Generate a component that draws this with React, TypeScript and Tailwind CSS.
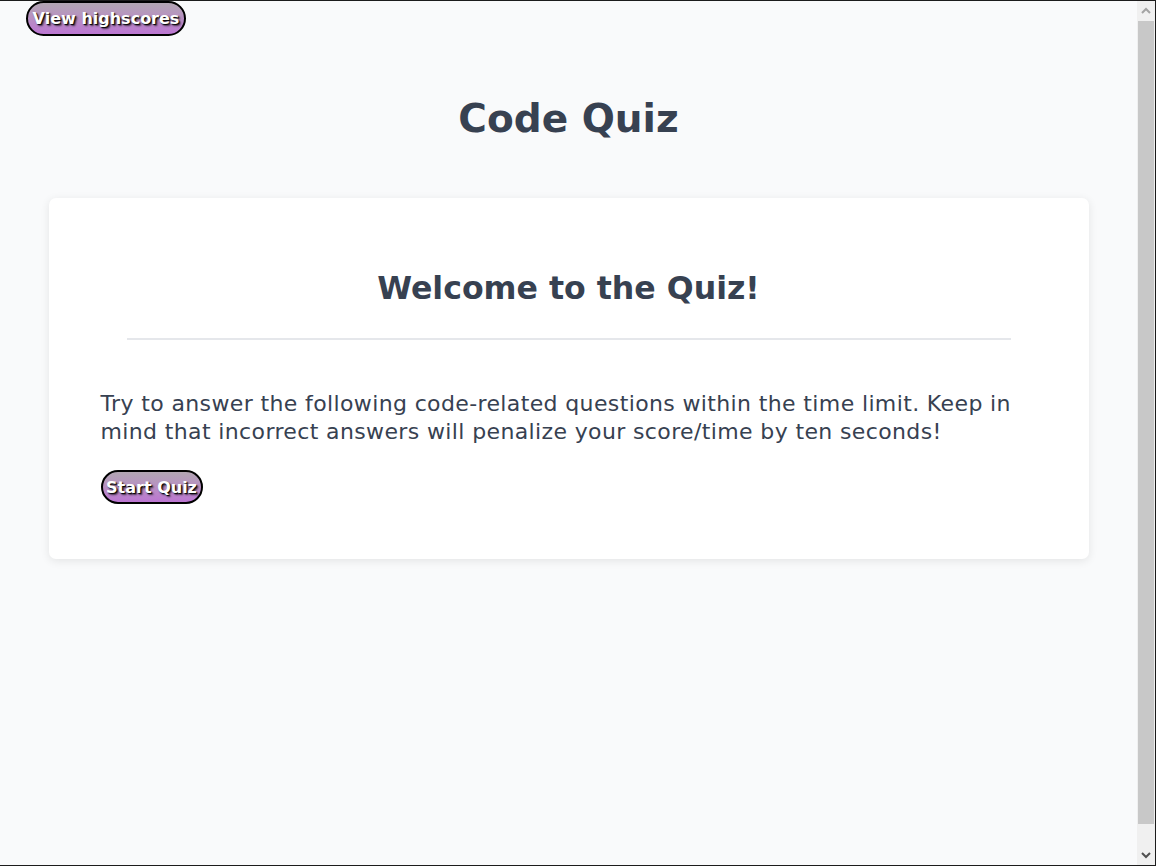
import React from "react";

function Btn({ children, className = "" }: { children: React.ReactNode; className?: string }) {
  return (
    <button
      className={
        "whitespace-nowrap flex items-center justify-center rounded-full border-2 border-black bg-gradient-to-b from-[#b2a6b2] to-[#bc76d2] text-white font-bold text-[16px] leading-[19px] [text-shadow:1px_1px_1px_#000,2px_2px_2px_rgba(0,0,0,0.6)] " +
        className
      }
    >
      {children}
    </button>
  );
}

export default function App() {
  return (
    <div className="w-[1156px] h-[866px] overflow-hidden flex border-y border-r border-[#1c1c1c] bg-[#f9fafb] font-['DejaVu_Sans',sans-serif] text-[#374151]">
      <div className="flex-1 flex flex-col">
        <div className="pl-[26px]">
          <Btn className="h-[35px] w-[160px]">View highscores</Btn>
        </div>
        <h1 className="mt-[59px] text-center text-[39px] leading-[48px] font-bold">Code Quiz</h1>
        <div className="mt-[55px] mx-auto w-[1040px] bg-white rounded-[7px] shadow-[0_2px_10px_rgba(0,0,0,0.09)] px-[52px] pt-[71px] pb-[55px]">
          <h2 className="text-center text-[31.6px] leading-[38px] font-bold">Welcome to the Quiz!</h2>
          <div className="mx-auto mt-[31px] w-[884px] h-[2px] bg-[#e5e7eb]" />
          <p className="mt-[50px] text-[22px] leading-[28px] tracking-[0.37px]">
            Try to answer the following code-related questions within the time limit. Keep in mind that incorrect answers will penalize your score/time by ten seconds!
          </p>
          <div className="mt-[24px]">
            <Btn className="h-[34px] w-[102px]">Start Quiz</Btn>
          </div>
        </div>
      </div>
      <div className="w-[18px] bg-[#f0f0f0] flex flex-col">
        <div className="h-[20px] flex items-center justify-center">
          <svg width="10" height="8" viewBox="0 0 10 8">
            <path d="M1 6 L5 2 L9 6" stroke="#a3a3a3" strokeWidth="2" fill="none" />
          </svg>
        </div>
        <div className="h-[803px] mx-[1px] bg-[#c8c8c8]" />
        <div className="flex-1 flex items-end justify-center pb-[6px]">
          <svg width="10" height="8" viewBox="0 0 10 8">
            <path d="M1 2 L5 6 L9 2" stroke="#505050" strokeWidth="2" fill="none" />
          </svg>
        </div>
      </div>
    </div>
  );
}
